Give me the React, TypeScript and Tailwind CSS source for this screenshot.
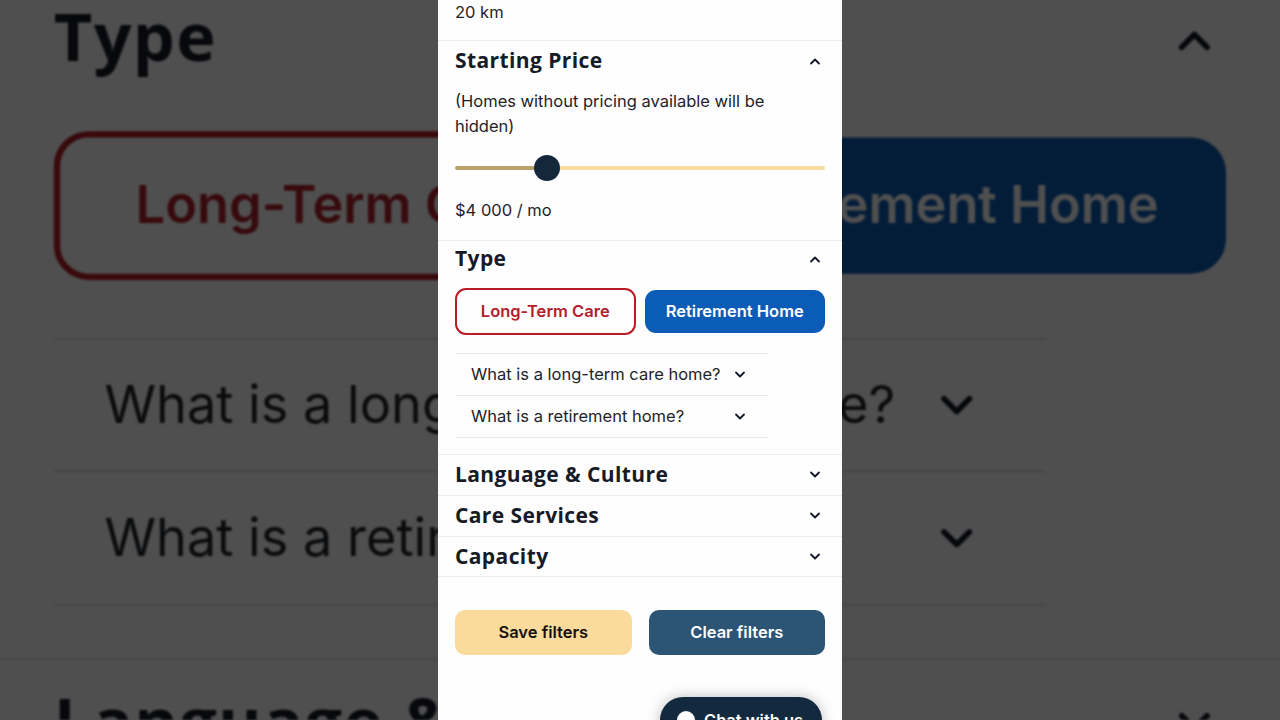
import { ReactNode } from "react";

function Chevron({ up, className = "" }: { up?: boolean; className?: string }) {
  return (
    <svg width="12" height="8" viewBox="0 0 12 8" className={className}>
      <path
        d={up ? "M2 6.5 6 2.5l4 4" : "M2 1.5l4 4 4-4"}
        stroke="#111827"
        strokeWidth="1.8"
        fill="none"
        strokeLinecap="round"
        strokeLinejoin="round"
      />
    </svg>
  );
}

function Header({ title, open, className = "h-[40px]" }: { title: string; open?: boolean; className?: string }) {
  return (
    <div className={`flex items-center justify-between px-[17px] ${className}`}>
      <h3 className="font-['Open_Sans',sans-serif] text-[21px] font-bold tracking-[0.4px] text-[#161b26]">{title}</h3>
      <Chevron up={open} className="mr-[4px]" />
    </div>
  );
}

function Section({ children }: { children: ReactNode }) {
  return <div className="border-b border-[#ebebeb]">{children}</div>;
}

const faqs = ["What is a long-term care home?", "What is a retirement home?"];

function Filters() {
  return (
    <div className="relative h-[720px] w-[404px] overflow-hidden bg-[#fefefe] font-['Inter',sans-serif] text-[16.5px] text-[#1f2329]">
      <Section>
        <div className="h-[40px] px-[17px] leading-6">20 km</div>
      </Section>

      <Section>
        <Header title="Starting Price" open />
        <div className="px-[17px] pb-[18px]">
          <p className="mt-[8px] max-w-[340px] leading-[25px]">(Homes without pricing available will be hidden)</p>
          <div className="relative mt-[16px] flex h-[26px] items-center">
            <div className="h-[4px] w-[92px] rounded-l-full bg-[#baa16c]" />
            <div className="h-[4px] flex-1 rounded-r-full bg-[#f9dca0]" />
            <div className="absolute left-[79px] top-0 h-[26px] w-[26px] rounded-full bg-[#13293b]" />
          </div>
          <p className="mt-[17px] leading-6">$4 000 / mo</p>
        </div>
      </Section>

      <Section>
        <Header title="Type" open className="h-[36px]" />
        <div className="px-[17px] pb-[16px]">
          <div className="mt-[11px] grid grid-cols-2 gap-[9px]">
            <button className="h-[47px] rounded-[11px] border-2 border-[#b91c24] font-semibold text-[#b3202a]">
              Long-Term Care
            </button>
            <button className="my-[2px] h-[43px] rounded-[11px] bg-[#0b5cb6] font-semibold text-white">
              Retirement Home
            </button>
          </div>
          <div className="mt-[18px] w-[313px] border-b border-[#e9e9e9]">
            {faqs.map((q) => (
              <div key={q} className="flex h-[42px] items-center justify-between border-t border-[#e9e9e9] pl-[16px] pr-[22px]">
                <span>{q}</span>
                <Chevron />
              </div>
            ))}
          </div>
        </div>
      </Section>

      <Section>
        <Header title="Language & Culture" />
      </Section>
      <Section>
        <Header title="Care Services" />
      </Section>
      <Section>
        <Header title="Capacity" className="h-[39px]" />
      </Section>

      <div className="mt-[33px] grid grid-cols-2 gap-[17px] px-[17px]">
        <button className="h-[45px] rounded-[10px] bg-[#fadb9c] font-semibold text-[#111]">Save filters</button>
        <button className="h-[45px] rounded-[10px] bg-[#2c5475] font-semibold text-white">Clear filters</button>
      </div>

      <div className="absolute right-[20px] top-[697px] flex h-[46px] w-[162px] items-center gap-[9px] rounded-full bg-[#13293d] pl-[17px] shadow-[0_0_14px_rgba(0,0,0,0.25)]">
        <span className="h-[18px] w-[18px] rounded-full bg-white" />
        <span className="font-semibold text-white">Chat with us</span>
      </div>
    </div>
  );
}

export default function App() {
  return (
    <div className="relative flex h-[720px] w-[1280px] justify-center overflow-hidden bg-[#4f4f4f]">
      <div aria-hidden className="absolute inset-0 overflow-hidden brightness-[0.31] blur-[1px]">
        <div className="w-[404px] origin-top-left scale-[3.168]">
          <div className="-translate-y-[246.6px]">
            <Filters />
          </div>
        </div>
      </div>
      <div className="relative">
        <Filters />
      </div>
    </div>
  );
}
